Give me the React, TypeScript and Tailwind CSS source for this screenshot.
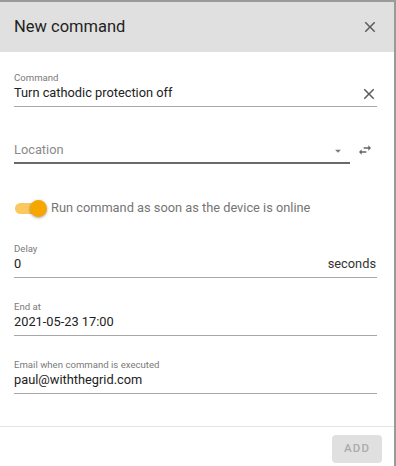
import { ReactNode } from "react";

type FieldProps = {
  label: string;
  value: string;
  suffix?: string;
  trailing?: ReactNode;
  className?: string;
};

function CloseIcon({ size = 18 }: { size?: number }) {
  return (
    <svg width={size} height={size} viewBox="0 0 24 24" fill="currentColor">
      <path d="M19 6.41L17.59 5 12 10.59 6.41 5 5 6.41 10.59 12 5 17.59 6.41 19 12 13.41 17.59 19 19 17.59 13.41 12z" />
    </svg>
  );
}

function Field({ label, value, suffix, trailing, className = "" }: FieldProps) {
  return (
    <div className={`flex flex-col ${className}`}>
      <span className="text-[9.6px] leading-[12px] text-[#7a7a7a]">{label}</span>
      <div className="flex h-[23px] items-start border-b border-[#a8a8a8] pb-[5px]">
        <span className="flex-1 text-[12.8px] leading-[18px] text-[#222]">{value}</span>
        {suffix ? <span className="mr-[1px] text-[12.8px] leading-[18px] text-[#333]">{suffix}</span> : null}
        {trailing}
      </div>
    </div>
  );
}

export default function App() {
  return (
    <div className="h-[466px] w-[396px] overflow-hidden bg-[#9a9a9a] font-['Roboto',sans-serif]">
      <div className="mt-[2px] flex h-[464px] w-[394px] flex-col bg-white">
        <div className="flex h-[50px] items-center justify-between bg-[#e0e0e0] pl-[14px] pr-[15px] pb-[1px]">
          <h2 className="text-[16.5px] font-normal leading-[20px] text-[#1f1f1f]">New command</h2>
          <span className="text-[#5c5c5c]">
            <CloseIcon size={18} />
          </span>
        </div>

        <div className="flex h-[374px] flex-col pl-[14px] pr-[17px] pt-[20px]">
          <Field
            label="Command"
            value="Turn cathodic protection off"
            trailing={
              <span className="mr-[-1px] mt-[1px] text-[#5c5c5c]">
                <CloseIcon size={18} />
              </span>
            }
          />

          <div className="mt-[34px] flex items-start">
            <div className="flex h-[23px] flex-1 items-start border-b-2 border-[#6a6a6a] pb-[3px]">
              <span className="flex-1 text-[12.8px] leading-[18px] text-[#8a8a8a]">Location</span>
              <svg width="14" height="14" viewBox="0 0 24 24" fill="#7a7a7a" className="mr-[5px] mt-[3px]">
                <path d="M7 10l5 5 5-5z" />
              </svg>
            </div>
            <div className="flex w-[27px] justify-center pl-[2px] pt-[1px] text-[#666]">
              <svg width="16" height="16" viewBox="0 0 24 24" fill="currentColor">
                <path d="M6.99 11L3 15l3.99 4v-3H14v-2H6.99v-3zM21 9l-4-4v3h-7v2h7v3l4-4z" />
              </svg>
            </div>
          </div>

          <div className="mt-[35px] flex h-[18px] items-center">
            <div className="relative ml-[1px] h-[11px] w-[29px] rounded-full bg-[#fbc860]">
              <span className="absolute right-[-3px] top-[-3px] h-[17px] w-[17px] rounded-full bg-[#f7a500] shadow-[0_1px_3px_rgba(0,0,0,0.35)]" />
            </div>
            <span className="ml-[7px] text-[12.8px] leading-[18px] text-[#757575]">
              Run command as soon as the device is online
            </span>
          </div>

          <Field className="mt-[26px]" label="Delay" value="0" suffix="seconds" />
          <Field className="mt-[23px]" label="End at" value="2021-05-23 17:00" />
          <Field className="mt-[23px]" label="Email when command is executed" value="paul@withthegrid.com" />
        </div>

        <div className="h-px bg-[#e4e4e4]" />

        <div className="flex justify-end pr-[12px] pt-[8px]">
          <button
            type="button"
            disabled
            className="h-[28px] w-[50px] rounded-[4px] bg-[#e0e0e0] text-[11.5px] font-medium tracking-[1.2px] text-[#ababab]"
          >
            ADD
          </button>
        </div>
      </div>
    </div>
  );
}
